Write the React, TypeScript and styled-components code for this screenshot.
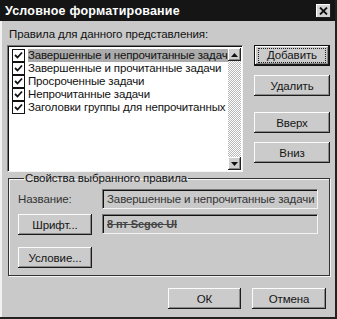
import React from 'react'
import styled, { createGlobalStyle, css } from 'styled-components'

const GlobalStyle = createGlobalStyle`
  html, body {
    margin: 0;
    padding: 0;
    background: #c9c9c9;
  }
  body {
    font-family: "Liberation Sans", Arial, sans-serif;
    font-size: 11.5px;
    letter-spacing: -0.1px;
    color: #111;
  }
`

const Window = styled.div`
  width: 337px;
  height: 319px;
  box-sizing: border-box;
  background: #c9c9c9;
  border-right: 2px solid #222;
  border-bottom: 2px solid #222;
  box-shadow: inset 2px 0 0 #f2f2f2;
  display: flex;
  flex-direction: column;
  overflow: hidden;
`

const TitleBar = styled.div`
  height: 21px;
  background: #151515;
  display: flex;
  align-items: center;
  padding: 0 3px 0 5px;
  flex-shrink: 0;
`

const Title = styled.div`
  flex: 1;
  color: #fff;
  font-weight: bold;
  font-size: 12.5px;
  letter-spacing: 0.2px;
`

const CloseBox = styled.div`
  width: 15px;
  height: 14px;
  margin-right: 1px;
  background: #d4d4d4;
  box-shadow: inset -1px -1px 0 #222, inset 1px 1px 0 #fff;
  display: flex;
  align-items: center;
  justify-content: center;
`

const Body = styled.div`
  flex: 1;
  display: flex;
  flex-direction: column;
  padding: 6px 5px 0 7px;
`

const TopArea = styled.div`
  display: flex;
  gap: 11px;
`

const RulesColumn = styled.div`
  width: 236px;
  display: flex;
  flex-direction: column;
`

const Caption = styled.div`
  padding-left: 2px;
  height: 14px;
  line-height: 14px;
  margin-bottom: 4px;
`

const ListBox = styled.div`
  height: 127px;
  box-sizing: border-box;
  background: #fff;
  border: 1px solid;
  border-color: #777 #f4f4f4 #f4f4f4 #777;
  box-shadow: inset 1px 1px 0 #111;
  display: flex;
  padding: 2px 1px 1px 2px;
`

const Items = styled.div`
  flex: 1;
  min-width: 0;
  overflow: hidden;
  padding-top: 1px;
`

const Item = styled.div`
  height: 13px;
  display: flex;
  align-items: center;
  padding-left: 2px;
  white-space: nowrap;
`

const CheckBox = styled.div`
  width: 11px;
  height: 11px;
  flex-shrink: 0;
  background: #fff;
  border: 1px solid #111;
  display: flex;
  align-items: center;
  justify-content: center;
  margin-right: 3px;
`

const ItemText = styled.span<{ $selected?: boolean }>`
  line-height: 13px;
  padding-right: 1px;
  letter-spacing: -0.15px;
  ${p => p.$selected && css`
    background: #ababab;
  `}
`

const ScrollBar = styled.div`
  width: 13px;
  flex-shrink: 0;
  display: flex;
  flex-direction: column;
`

const ScrollArrow = styled.div`
  width: 13px;
  height: 13px;
  box-sizing: border-box;
  background: #cfcfcf;
  box-shadow: inset -1px -1px 0 #222, inset 1px 1px 0 #fff, inset -2px -2px 0 #888;
  display: flex;
  align-items: center;
  justify-content: center;
`

const ScrollTrack = styled.div`
  flex: 1;
  background: repeating-conic-gradient(#fff 0 25%, #b8b8b8 0 50%) 0 0 / 2px 2px;
`

const SideButtons = styled.div`
  display: flex;
  flex-direction: column;
  padding-top: 18px;
`

const Button = styled.div<{ $default?: boolean; $width?: number; $gap?: number }>`
  width: ${p => p.$width ?? 76}px;
  height: 21px;
  box-sizing: border-box;
  margin-top: ${p => p.$gap ?? 0}px;
  background: #cbcbcb;
  box-shadow: inset -1px -1px 0 #1c1c1c, inset 1px 1px 0 #fbfbfb, inset -2px -2px 0 #8a8a8a;
  display: flex;
  align-items: center;
  justify-content: center;
  color: #151515;
  ${p => p.$default && css`
    border: 1px solid #111;
  `}
`

const FocusLabel = styled.span`
  outline: 1px dotted #222;
  outline-offset: 0;
  width: 66px;
  height: 13px;
  line-height: 13px;
  text-align: center;
`

const Group = styled.fieldset`
  margin: 0 0 0 1px;
  width: 322px;
  height: 104px;
  box-sizing: border-box;
  border: 1px solid #333;
  box-shadow: 1px 1px 0 #f4f4f4, inset 1px 1px 0 #f4f4f4;
  padding: 4px 11px 0 9px;
  display: grid;
  grid-template-columns: 74px 1fr;
  column-gap: 10px;
  align-content: start;
`

const Legend = styled.legend`
  padding: 0 1px;
  margin-left: 6px;
  line-height: 13px;
`

const FieldLabel = styled.div`
  height: 20px;
  display: flex;
  align-items: center;
  color: #333;
`

const Field = styled.div<{ $struck?: boolean }>`
  height: 20px;
  box-sizing: border-box;
  border: 1px solid;
  border-color: #777 #f4f4f4 #f4f4f4 #777;
  box-shadow: inset 1px 1px 0 #111;
  display: flex;
  align-items: center;
  padding-left: 4px;
  white-space: nowrap;
  overflow: hidden;
  color: #333;
  ${p => p.$struck && css`
    font-weight: bold;
    text-decoration: line-through;
    font-size: 11px;
    color: #444;
  `}
`

const RowGap = styled.div<{ $h: number }>`
  grid-column: 1 / -1;
  height: ${p => p.$h}px;
`

const Footer = styled.div`
  display: flex;
  justify-content: flex-end;
  gap: 11px;
  padding: 12px 4px 0 0;
`

const Check = () => (
  <svg width="9" height="9" viewBox="0 0 9 9">
    <path d="M1 4 L3.5 6.5 L8 1.5" stroke="#111" strokeWidth="1.8" fill="none" />
  </svg>
)

const rules = [
  'Завершенные и непрочитанные задачи',
  'Завершенные и прочитанные задачи',
  'Просроченные задачи',
  'Непрочитанные задачи',
  'Заголовки группы для непрочитанных',
]

export default function App() {
  return (
    <>
      <GlobalStyle />
      <Window>
        <TitleBar>
          <Title>Условное форматирование</Title>
          <CloseBox>
            <svg width="9" height="8" viewBox="0 0 9 8">
              <path d="M1 0.5 L8 7.5 M8 0.5 L1 7.5" stroke="#111" strokeWidth="1.8" />
            </svg>
          </CloseBox>
        </TitleBar>
        <Body>
          <TopArea>
            <RulesColumn>
              <Caption>Правила для данного представления:</Caption>
              <ListBox>
                <Items>
                  {rules.map((r, i) => (
                    <Item key={r}>
                      <CheckBox><Check /></CheckBox>
                      <ItemText $selected={i === 0}>{r}</ItemText>
                    </Item>
                  ))}
                </Items>
                <ScrollBar>
                  <ScrollArrow>
                    <svg width="7" height="4" viewBox="0 0 7 4"><path d="M3.5 0 L7 4 L0 4 Z" fill="#111" /></svg>
                  </ScrollArrow>
                  <ScrollTrack />
                  <ScrollArrow>
                    <svg width="7" height="4" viewBox="0 0 7 4"><path d="M0 0 L7 0 L3.5 4 Z" fill="#111" /></svg>
                  </ScrollArrow>
                </ScrollBar>
              </ListBox>
            </RulesColumn>
            <SideButtons>
              <Button $default><FocusLabel>Добавить</FocusLabel></Button>
              <Button $gap={9}>Удалить</Button>
              <Button $gap={16}>Вверх</Button>
              <Button $gap={9}>Вниз</Button>
            </SideButtons>
          </TopArea>
          <Group>
            <Legend>Свойства выбранного правила</Legend>
            <FieldLabel>Название:</FieldLabel>
            <Field>Завершенные и непрочитанные задачи</Field>
            <RowGap $h={5} />
            <Button $width={74}>Шрифт...</Button>
            <Field $struck>8 пт Segoe UI</Field>
            <RowGap $h={12} />
            <Button $width={74}>Условие...</Button>
          </Group>
          <Footer>
            <Button $width={73}>ОК</Button>
            <Button $width={74}>Отмена</Button>
          </Footer>
        </Body>
      </Window>
    </>
  )
}
